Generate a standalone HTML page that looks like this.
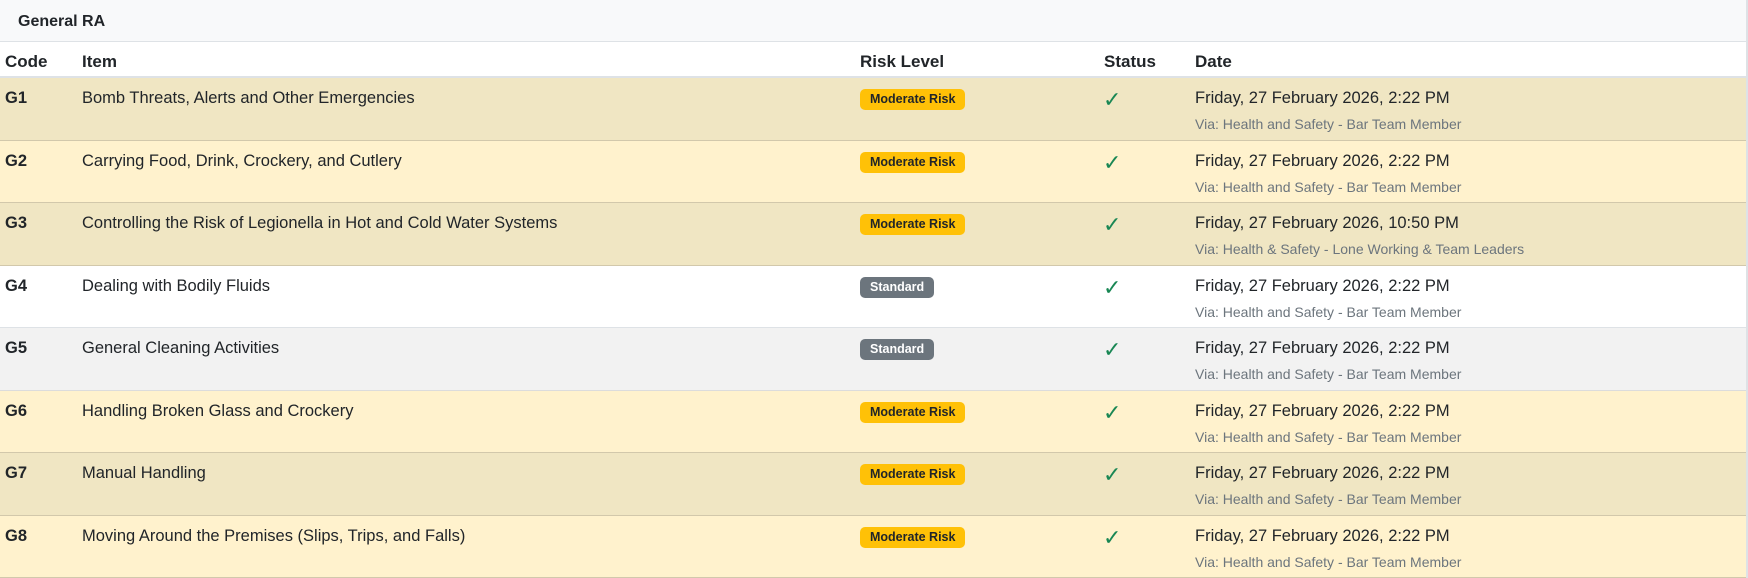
<!DOCTYPE html>
<html><head><style>
*{margin:0;padding:0;box-sizing:border-box}
body{width:1748px;height:578px;overflow:hidden;background:#fff;font-family:"Liberation Sans",sans-serif;color:#212529;position:relative}
.card{position:absolute;left:0;top:0;width:1748px;height:578px;border-right:2px solid #dee2e6}
.title{height:42px;background:#f8f9fa;border-bottom:1px solid #dee2e6;font-weight:bold;font-size:16px;padding:13px 0 0 18px}
.hdr{height:36px;border-bottom:2px solid #dee2e6;position:relative;font-weight:bold;font-size:17px}
.hdr span,.row span{position:absolute}
.row{height:62.5px;position:relative;border-bottom:1px solid #d2c8ab;font-size:16.5px}
.c1{left:5px}.c2{left:82px}.c3{left:860px}.c4{left:1104px}.c5{left:1195px}
.hdr span{top:10px}
.row .t{top:11px}
.row .code{font-weight:bold}
.sub{top:38px;font-size:14px;color:#6c757d}
.badge{top:11px;height:21px;border-radius:5px;font-size:12.5px;font-weight:bold;padding:3px 10px 0;line-height:15px}
.mod{background:#ffc107;color:#212529}
.std{background:#6c757d;color:#fff}
.chk{left:1103px;top:10px;color:#198754;font-size:22px;font-family:"DejaVu Sans",sans-serif}
</style></head><body><div class="card">
<div class="title">General RA</div>
<div class="hdr"><span class="c1">Code</span><span class="c2">Item</span><span class="c3">Risk Level</span><span class="c4">Status</span><span class="c5">Date</span></div>

<div class="row" style="background:#f0e6c3"><span class="t c1 code">G1</span><span class="t c2">Bomb Threats, Alerts and Other Emergencies</span><span class="badge mod c3">Moderate Risk</span><span class="chk">✓</span><span class="t c5">Friday, 27 February 2026, 2:22 PM</span><span class="sub c5">Via: Health and Safety - Bar Team Member</span></div>
<div class="row" style="background:#fff2cd"><span class="t c1 code">G2</span><span class="t c2">Carrying Food, Drink, Crockery, and Cutlery</span><span class="badge mod c3">Moderate Risk</span><span class="chk">✓</span><span class="t c5">Friday, 27 February 2026, 2:22 PM</span><span class="sub c5">Via: Health and Safety - Bar Team Member</span></div>
<div class="row" style="background:#f0e6c3"><span class="t c1 code">G3</span><span class="t c2">Controlling the Risk of Legionella in Hot and Cold Water Systems</span><span class="badge mod c3">Moderate Risk</span><span class="chk">✓</span><span class="t c5">Friday, 27 February 2026, 10:50 PM</span><span class="sub c5">Via: Health &amp; Safety - Lone Working &amp; Team Leaders</span></div>
<div class="row" style="background:#fff;border-bottom-color:#dee2e6"><span class="t c1 code">G4</span><span class="t c2">Dealing with Bodily Fluids</span><span class="badge std c3">Standard</span><span class="chk">✓</span><span class="t c5">Friday, 27 February 2026, 2:22 PM</span><span class="sub c5">Via: Health and Safety - Bar Team Member</span></div>
<div class="row" style="background:#f2f2f2;border-bottom-color:#dcdcdc"><span class="t c1 code">G5</span><span class="t c2">General Cleaning Activities</span><span class="badge std c3">Standard</span><span class="chk">✓</span><span class="t c5">Friday, 27 February 2026, 2:22 PM</span><span class="sub c5">Via: Health and Safety - Bar Team Member</span></div>
<div class="row" style="background:#fff2cd"><span class="t c1 code">G6</span><span class="t c2">Handling Broken Glass and Crockery</span><span class="badge mod c3">Moderate Risk</span><span class="chk">✓</span><span class="t c5">Friday, 27 February 2026, 2:22 PM</span><span class="sub c5">Via: Health and Safety - Bar Team Member</span></div>
<div class="row" style="background:#f0e6c3"><span class="t c1 code">G7</span><span class="t c2">Manual Handling</span><span class="badge mod c3">Moderate Risk</span><span class="chk">✓</span><span class="t c5">Friday, 27 February 2026, 2:22 PM</span><span class="sub c5">Via: Health and Safety - Bar Team Member</span></div>
<div class="row" style="background:#fff2cd"><span class="t c1 code">G8</span><span class="t c2">Moving Around the Premises (Slips, Trips, and Falls)</span><span class="badge mod c3">Moderate Risk</span><span class="chk">✓</span><span class="t c5">Friday, 27 February 2026, 2:22 PM</span><span class="sub c5">Via: Health and Safety - Bar Team Member</span></div>
</div></body></html>
